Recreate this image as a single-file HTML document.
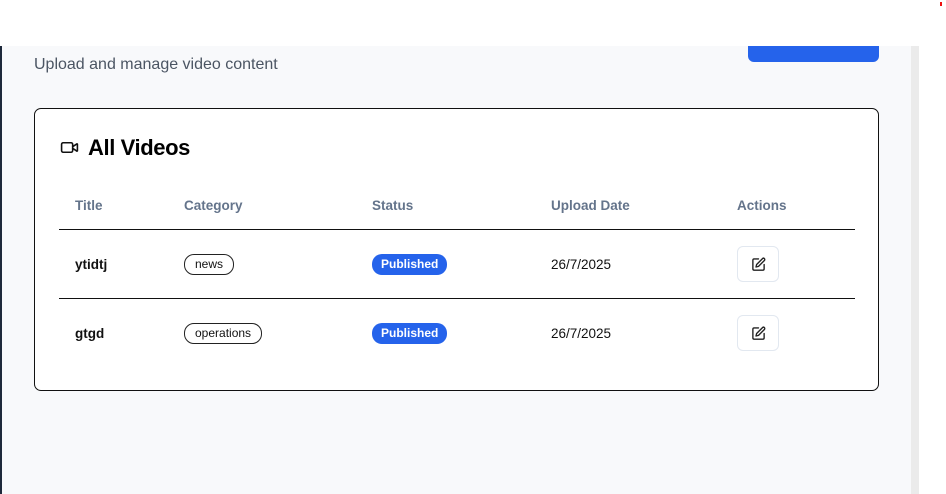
<!DOCTYPE html>
<html><head><style>
*{margin:0;padding:0;box-sizing:border-box}
body{width:946px;height:494px;overflow:hidden;font-family:"Liberation Sans",sans-serif;background:#fff;position:relative}
.main{position:absolute;left:0;top:46px;width:911px;height:448px;background:#f8f9fb;border-left:2px solid #1e293b}
.sb{position:absolute;left:911px;top:46px;width:8px;height:448px;background:#ebebeb}
.top{position:absolute;left:0;top:0;width:946px;height:46px;background:#fff;z-index:2}
.dot{position:absolute;left:940px;top:2px;width:2px;height:4px;background:#e11;z-index:3}
.btn{position:absolute;left:748px;top:30px;width:131px;height:32px;background:#2563eb;border-radius:6px}
.sub{position:absolute;left:34px;top:56px;font-size:16px;color:#4b5563}
.card{position:absolute;left:34px;top:108px;width:845px;height:283px;background:#fff;border:1px solid #111;border-radius:7px}
h2{position:absolute;left:53px;top:26px;font-size:22px;font-weight:600;color:#000;letter-spacing:-0.4px}
.ic{position:absolute;left:25px;top:29px}
.th{position:absolute;top:89px;font-size:13.5px;font-weight:600;color:#64748b}
.line{position:absolute;left:24px;width:796px;height:1px;background:#111}
.td{position:absolute;font-size:13.5px;color:#111}
.b{font-weight:700}
.cat{position:absolute;font-size:12px;border:1px solid #222;border-radius:10px;padding:2px 10px;height:21px;line-height:15px;color:#111}
.pub{position:absolute;font-size:12px;font-weight:700;color:#fff;background:#2563eb;border-radius:10px;height:21px;line-height:21px;padding:0 9px}
.ed{position:absolute;left:702px;width:42px;height:36px;border:1px solid #e2e8f0;border-radius:6px;background:#fff}
.ed svg{position:absolute;left:13px;top:10px}
</style></head><body>
<div class="top"></div><div class="dot"></div>
<div class="main"></div><div class="sb"></div>
<div class="btn"></div>
<div class="sub">Upload and manage video content</div>
<div class="card">
<svg class="ic" width="19" height="19" viewBox="0 0 24 24" fill="none" stroke="#111" stroke-width="2" stroke-linecap="round" stroke-linejoin="round"><path d="m16 13 5.2 3.5a.5.5 0 0 0 .8-.4V7.9a.5.5 0 0 0-.8-.4L16 11"/><rect x="2" y="6" width="14" height="12" rx="2"/></svg>
<h2>All Videos</h2>
<div class="th" style="left:40px">Title</div>
<div class="th" style="left:149px">Category</div>
<div class="th" style="left:337px">Status</div>
<div class="th" style="left:516px">Upload Date</div>
<div class="th" style="left:702px">Actions</div>
<div class="line" style="top:120px"></div>
<div class="td b" style="left:40px;top:148px">ytidtj</div>
<div class="cat" style="left:149px;top:145px">news</div>
<div class="pub" style="left:337px;top:145px">Published</div>
<div class="td" style="left:516px;top:148px">26/7/2025</div>
<div class="ed" style="top:137px"><svg width="15" height="15" viewBox="0 0 24 24" fill="none" stroke="#222" stroke-width="2.2" stroke-linecap="round" stroke-linejoin="round"><path d="M12 3H5a2 2 0 0 0-2 2v14a2 2 0 0 0 2 2h14a2 2 0 0 0 2-2v-7"/><path d="M18.4 2.6a2.1 2.1 0 1 1 3 3L12 15l-4 1 1-4Z"/></svg></div>
<div class="line" style="top:189px"></div>
<div class="td b" style="left:40px;top:217px">gtgd</div>
<div class="cat" style="left:149px;top:214px">operations</div>
<div class="pub" style="left:337px;top:214px">Published</div>
<div class="td" style="left:516px;top:217px">26/7/2025</div>
<div class="ed" style="top:206px"><svg width="15" height="15" viewBox="0 0 24 24" fill="none" stroke="#222" stroke-width="2.2" stroke-linecap="round" stroke-linejoin="round"><path d="M12 3H5a2 2 0 0 0-2 2v14a2 2 0 0 0 2 2h14a2 2 0 0 0 2-2v-7"/><path d="M18.4 2.6a2.1 2.1 0 1 1 3 3L12 15l-4 1 1-4Z"/></svg></div>
</div>
</body></html>
